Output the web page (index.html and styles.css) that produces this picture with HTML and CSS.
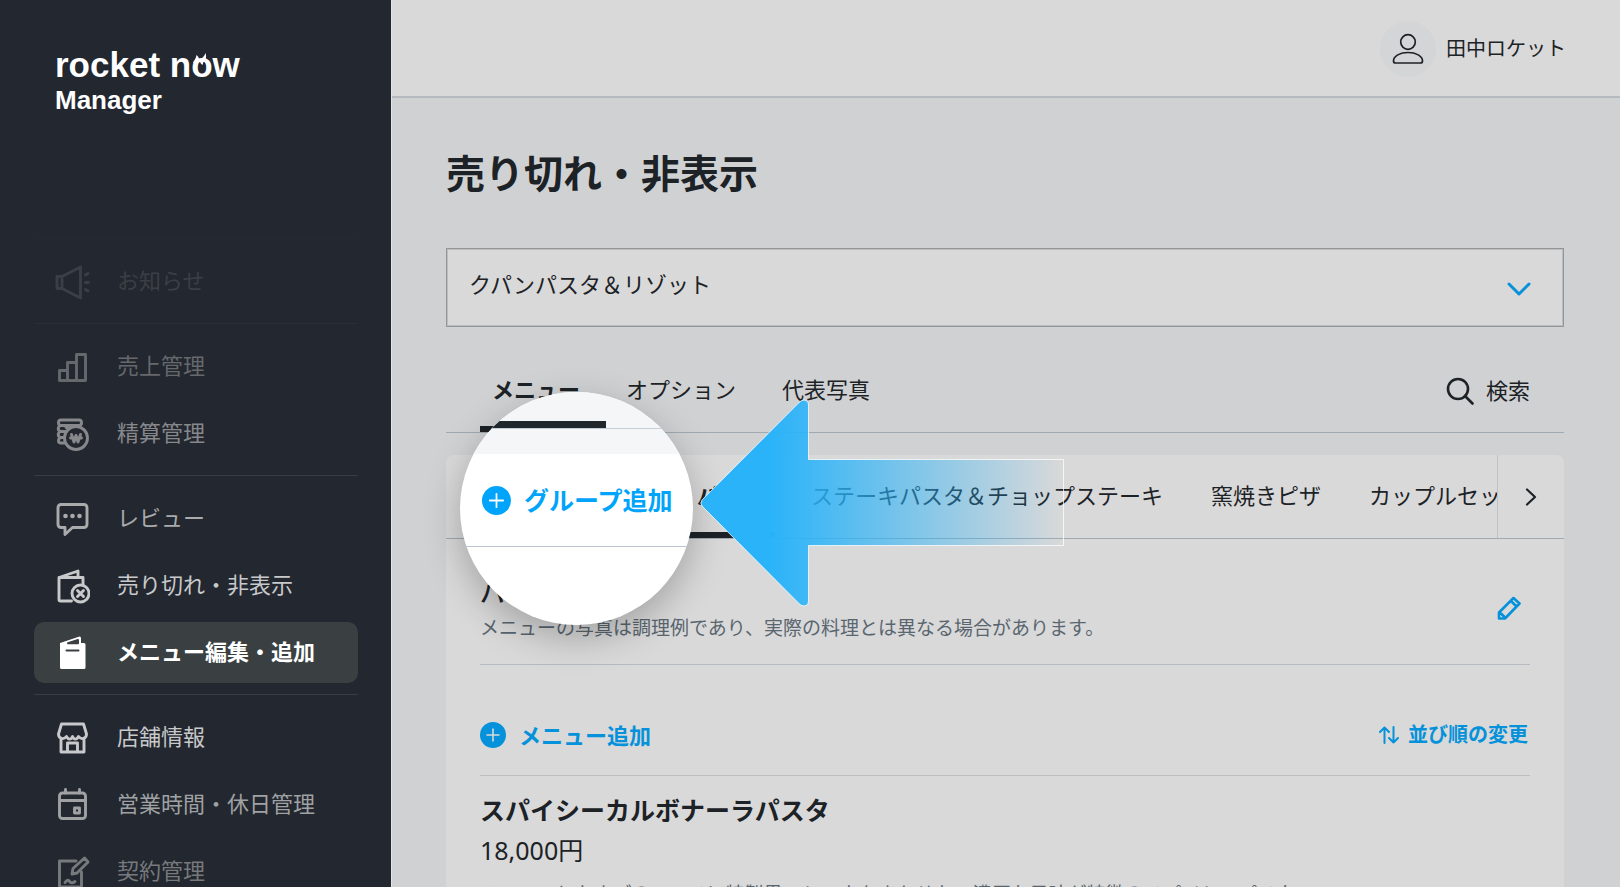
FILE: index.html
```html
<!DOCTYPE html>
<html lang="ja">
<head>
<meta charset="utf-8">
<meta name="viewport" content="width=device-width, initial-scale=1">
<title>rocket now Manager</title>
<link rel="stylesheet" href="styles.css">
</head>
<body>
<div class="app">
  <aside class="sidebar">
    <div class="brand">
      <div class="brand-name">rocket now
        <svg class="brand-flame" viewBox="0 0 24 26" aria-hidden="true">
          <path d="M3 11C4 8 6 7 6.500 3 8 4 9 6 9 7.500 12 6.500 14.500 4.500 15.500 1 16.500 4 16 6 15.500 7.500 18 8 19.500 9.500 20 11L16 11.500C15 10 14 10 13.500 9.800L12.500 13C11 12 10.500 11 10 10 8 10 7 11 6.500 12Z"/>
        </svg>
      </div>
      <div class="brand-role">Manager</div>
    </div>
    <nav class="side-nav" aria-label="メインメニュー">
      <div class="side-group">
        <a class="side-item tone-1" href="#">
          <svg class="side-icon" viewBox="0 0 36 36"><path d="M3 12.500h5v12H3zM8 12.500 26.500 3v31L8 24.500zM31.500 11l2.500-1.500M31.500 18.500h3M31.500 25.500l2.500 1.500"/></svg>
          <span>お知らせ</span>
        </a>
      </div>
      <div class="side-group">
        <a class="side-item tone-2" href="#">
          <svg class="side-icon" viewBox="0 0 36 36"><path d="M5.500 21.500h8v10h-8zM13.500 13.500h9v18h-9zM22.500 5.500h9v26h-9z"/></svg>
          <span>売上管理</span>
        </a>
        <a class="side-item tone-3" href="#">
          <svg class="side-icon" viewBox="0 0 36 36"><rect x="4.500" y="4" width="23" height="5.500" rx="2.500"/><path d="M6.500 9.500C3.500 11 3.500 14.500 6.500 15.500h5M6.500 15.500C3.500 17 3.500 20.500 6.500 21.500h4M6.500 21.500C3.500 23.500 4 27 7 27h4M12 11.500h5"/><circle cx="22" cy="22" r="11.500"/><path d="m17.500 18.500 2.500 7.500 2-6.500 2 6.500 2.500-7.500M16.500 22h11"/></svg>
          <span>精算管理</span>
        </a>
      </div>
      <div class="side-group">
        <a class="side-item tone-4" href="#">
          <svg class="side-icon" viewBox="0 0 36 36"><path d="M7 3.500h23a3 3 0 0 1 3 3v17a3 3 0 0 1-3 3H18.500L11 33.500v-7H7a3 3 0 0 1-3-3v-17a3 3 0 0 1 3-3Z"/><g class="solid"><circle cx="11.500" cy="15" r="2.300"/><circle cx="18.500" cy="15" r="2.300"/><circle cx="25.500" cy="15" r="2.300"/></g></svg>
          <span>レビュー</span>
        </a>
        <a class="side-item tone-5" href="#">
          <svg class="side-icon" viewBox="0 0 36 36"><path d="M17.500 33h-11a1.500 1.500 0 0 1-1.500-1.500V9.500h24V16M5 9.500 24 3v6.500M10 9.500h14"/><circle cx="26.500" cy="25.500" r="8.500"/><path d="m23.500 22.500 6 6m0-6-6 6"/></svg>
          <span>売り切れ・非表示</span>
        </a>
        <a class="side-item side-item-active" href="#" aria-current="page">
          <svg class="side-icon" viewBox="0 0 36 36"><path class="solid" d="M6 8 25.500 1.500Q27 1.500 27 3v5h3a1.500 1.500 0 0 1 1.500 1.500v23a1.500 1.500 0 0 1-1.500 1.500H7.500A1.500 1.500 0 0 1 6 32.500Z"/><path class="cutout" d="M14 8.300 24 5v3.300ZM12.500 15.500h12"/></svg>
          <span>メニュー編集・追加</span>
        </a>
      </div>
      <div class="side-group">
        <a class="side-item tone-6" href="#">
          <svg class="side-icon" viewBox="0 0 36 36"><path d="M7.500 4h22l3 10c0 5-5.500 6-8 2.500-2 3.500-4.500 3.500-6 0-1.500 3.500-4 3.500-6 0-2.500 3.500-8 2.500-8-2.500ZM7 18.500V32h23V18.500M13.500 32v-9h10v9"/></svg>
          <span>店舗情報</span>
        </a>
        <a class="side-item tone-7" href="#">
          <svg class="side-icon" viewBox="0 0 36 36"><rect x="5.500" y="6" width="26" height="25.500" rx="3"/><path d="M5.500 13.500h26M11.500 2.500V6M25.500 2.500V6M20.500 21h5v5h-5z"/></svg>
          <span>営業時間・休日管理</span>
        </a>
        <a class="side-item tone-8" href="#">
          <svg class="side-icon" viewBox="0 0 36 36"><path d="M22 7H5.500v26h22V18M11 28.500c3-4 4-1.500 5-.5s3 1 5-.5M18 20l1-5.500L30.500 4l3.500 4-11 11Z"/></svg>
          <span>契約管理</span>
        </a>
      </div>
    </nav>
  </aside>

  <div class="workspace">
    <header class="topbar">
      <button class="account" type="button">
        <span class="avatar"><svg viewBox="0 0 32 32" aria-hidden="true"><circle cx="16" cy="9" r="7.300"/><path d="M3.500 30h25a2 2 0 0 0 2-2C30.500 23 24 19.500 16 19.500S1.500 23 1.500 28a2 2 0 0 0 2 2Z"/></svg></span>
        <span>田中ロケット</span>
      </button>
    </header>

    <main class="content">
      <h1 class="page-title">売り切れ・非表示</h1>
      <div class="store-picker">
        <select class="store-select" aria-label="店舗">
          <option>クパンパスタ＆リゾット</option>
        </select>
        <svg class="store-chevron" viewBox="0 0 24 14" aria-hidden="true"><path d="m2 2 10 10L22 2"/></svg>
      </div>

      <div class="tabs">
        <button class="tab tab-active" type="button">メニュー</button>
        <button class="tab" type="button">オプション</button>
        <button class="tab" type="button">代表写真</button>
        <button class="search" type="button">
          <svg viewBox="0 0 28 28" aria-hidden="true"><circle cx="12" cy="12" r="10"/><path d="m19 19 7.500 7.500"/></svg>
          <span>検索</span>
        </button>
      </div>

      <section class="card">
        <div class="groups">
          <div class="group-list">
            <button class="tab tab-active" type="button">パスタ</button>
            <button class="tab" type="button">ステーキパスタ＆チョップステーキ</button>
            <button class="tab" type="button">窯焼きピザ</button>
            <button class="tab" type="button">カップルセット</button>
          </div>
          <button class="group-next" type="button" aria-label="次へ"><svg viewBox="0 0 12 18" aria-hidden="true"><path d="m2 1.500 8 7.500-8 7.500"/></svg></button>
        </div>

        <div class="card-body">
          <div class="group-head">
            <div class="group-text">
              <h2 class="group-title">パスタ</h2>
              <p class="note">メニューの写真は調理例であり、実際の料理とは異なる場合があります。</p>
            </div>
            <button class="edit" type="button" aria-label="編集"><svg viewBox="0 0 24 24" aria-hidden="true"><path d="M2 22.500v-6L16.500 2 22.500 7.500 8 22.500ZM14 5l5.500 5.500M3 16.500l5.500 5.500"/></svg></button>
          </div>
          <div class="menu-actions">
            <button class="add" type="button">
              <svg viewBox="0 0 26 26" aria-hidden="true"><circle cx="13" cy="13" r="13"/><path d="M13 7v12M7 13h12"/></svg>
              <span>メニュー追加</span>
            </button>
            <button class="sort" type="button">
              <svg viewBox="0 0 20 18" aria-hidden="true"><path d="M5.500 17V1.500M1 6l4.500-4.500L10 6M14.500 1v15.500M10 12l4.500 4.500L19 12"/></svg>
              <span>並び順の変更</span>
            </button>
          </div>
          <article class="menu-item">
            <h3 class="item-title">スパイシーカルボナーラパスタ</h3>
            <p class="price">18,000円</p>
            <p class="note">ベーコンとたまごのソースに特製黒コショウをきかせた、濃厚な風味が特徴のスパイシーパスタ</p>
          </article>
        </div>
      </section>
    </main>

    <div class="lens">
      <div class="lens-tabs"><div class="lens-bar"></div></div>
      <div class="lens-row">
        <button class="add add-large" type="button">
          <svg viewBox="0 0 26 26" aria-hidden="true"><circle cx="13" cy="13" r="13"/><path d="M13 7v12M7 13h12"/></svg>
          <span>グループ追加</span>
        </button>
      </div>
    </div>

    <svg class="pointer" viewBox="0 0 366 210" aria-hidden="true">
      <defs>
        <linearGradient id="pointer-fill" gradientUnits="userSpaceOnUse" x1="68" y1="0" x2="364" y2="0">
          <stop offset="0" stop-color="#2ab3f9"/>
          <stop offset=".14" stop-color="#2ab3f9" stop-opacity=".87"/>
          <stop offset="1" stop-color="#2ab3f9" stop-opacity="0"/>
        </linearGradient>
      </defs>
      <path fill="url(#pointer-fill)" stroke="#fff" stroke-opacity=".75" d="M2 102Q-.5 105 2 108L98.500 205Q101 208 104 208 108.500 207.500 108.500 203V147.500H363.500V61.500H108.500V7Q108.500 2.500 104 2 101 2 98.500 5Z"/>
    </svg>
  </div>
</div>
</body>
</html>
```

FILE: styles.css
```css
* { box-sizing: border-box; }

body {
  margin: 0;
  font-family: "Noto Sans", "Noto Sans CJK JP", sans-serif;
  font-size: 22px;
  line-height: 30px;
  color: #1c2226;
  background: #d0d1d3;
}

h1, h2, h3, p { margin: 0; }

button {
  margin: 0;
  padding: 0;
  border: 0;
  background: none;
  font: inherit;
  color: inherit;
  white-space: nowrap;
}

svg {
  display: block;
  flex: none;
  fill: none;
  stroke: currentColor;
  stroke-linecap: round;
  stroke-linejoin: round;
}

.app {
  display: flex;
  height: 100vh;
  overflow: hidden;
}

/* Sidebar */
.sidebar {
  flex: none;
  width: 392px;
  padding: 46px 33px 0 34px;
  border-right: 1px solid #e4e5e7;
  background: #23272f;
  color: #fff;
}

.brand {
  height: 192px;
  padding-left: 21px;
  font-family: "Liberation Sans", Arial, sans-serif;
  font-weight: 700;
}

.brand-name {
  position: relative;
  width: max-content;
  font-size: 35px;
  line-height: 38px;
}

.brand-flame {
  position: absolute;
  right: 26px;
  bottom: 6px;
  width: 24px;
  height: 26px;
  fill: #fff;
  stroke: none;
}

.brand-role {
  font-size: 26px;
  line-height: 32px;
}

.side-group {
  display: flex;
  flex-direction: column;
  gap: 6px;
  padding: 12px 0 11px;
  border-top: 1px solid #383d44;
}

.side-group:nth-child(1) { border-color: #252a31; }
.side-group:nth-child(2) { border-color: #2a2e35; }

.side-item {
  display: flex;
  align-items: center;
  gap: 27px;
  height: 61px;
  padding: 0 20px;
  border-radius: 10px;
  color: #fff;
  text-decoration: none;
  white-space: nowrap;
}

.side-item span { padding-bottom: 3px; }

.side-item-active {
  background: #3a3f42;
  font-weight: 700;
}

.side-icon {
  width: 36px;
  height: 36px;
  stroke-width: 2.9;
}

.side-icon .solid { fill: currentColor; stroke: none; }
.side-icon .cutout { fill: #3a3f42; stroke: #3a3f42; stroke-width: 2; }

.tone-1 { color: #3b3f45; }
.tone-2 { color: #65686c; }
.tone-3 { color: #86888b; }
.tone-4 { color: #a9aaac; }
.tone-5 { color: #c8c9ca; }
.tone-6 { color: #c8c9ca; }
.tone-7 { color: #9fa1a3; }
.tone-8 { color: #777a7d; }

/* Workspace */
.workspace {
  position: relative;
  flex: 1;
  min-width: 0;
}

.topbar {
  display: flex;
  justify-content: flex-end;
  align-items: center;
  height: 98px;
  padding: 2px 54px 0;
  border-bottom: 2px solid #b5b9c0;
  background: #d9d9d9;
}

.account {
  display: flex;
  align-items: center;
  gap: 10px;
  font-size: 20px;
}

.avatar {
  display: grid;
  place-items: center;
  width: 56px;
  height: 56px;
  border-radius: 50%;
  background: #d4d5d7;
}

.avatar svg {
  width: 32px;
  height: 32px;
  stroke-width: 1.7;
}

.content { padding: 47px 56px 0 54px; }

.page-title {
  margin-bottom: 47px;
  font-size: 39px;
  line-height: 56px;
}

.store-picker { position: relative; }

.store-select {
  display: block;
  width: 100%;
  height: 79px;
  padding: 0 22px 8px;
  border: 1px solid #949596;
  border-radius: 0;
  box-shadow: inset 0 0 0 1px #bcbdbe;
  background: #d9d9d9;
  appearance: none;
  font: inherit;
  color: inherit;
}

.store-chevron {
  position: absolute;
  top: 34px;
  right: 33px;
  width: 24px;
  height: 14px;
  color: #0890d8;
  stroke-width: 3;
  pointer-events: none;
}

.tabs {
  display: flex;
  gap: 22px;
  margin: 29px 0 22px;
  padding: 0 34px;
  border-bottom: 1px solid #9fabb2;
}

.tab {
  padding: 18px 12px 22px;
  border-bottom: 6px solid transparent;
}

.tab-active {
  border-color: #1c2226;
  font-weight: 700;
}

.search {
  display: flex;
  align-items: center;
  gap: 12px;
  margin-left: auto;
  padding-bottom: 6px;
}

.search span { padding-bottom: 3px; }

.search svg {
  width: 28px;
  height: 28px;
  stroke-width: 2.6;
}

.card {
  border-radius: 8px 8px 0 0;
  background: #d9d9d9;
}

.groups {
  display: flex;
  border-bottom: 1px solid #9faab2;
}

.group-list {
  display: flex;
  flex: 1;
  gap: 24px;
  min-width: 0;
  padding: 7px 0 0 239px;
  overflow: hidden;
}

.group-next {
  display: grid;
  place-items: center;
  width: 67px;
  border-left: 1px solid #bec1c4;
}

.group-next svg {
  width: 12px;
  height: 18px;
  stroke-width: 2.2;
}

.card-body { padding: 0 34px; }

.group-head {
  display: flex;
  justify-content: space-between;
  align-items: center;
  padding: 35px 0 22px;
  border-bottom: 1px solid #b6bac1;
}

.group-title,
.item-title {
  font-size: 25px;
  line-height: 36px;
}

.group-title { font-weight: 500; }

.note {
  margin-top: 4px;
  font-size: 19px;
  line-height: 28px;
  color: #596670;
  white-space: nowrap;
}

.edit { padding-right: 9px; }

.edit svg {
  width: 24px;
  height: 24px;
  color: #0592da;
  stroke-width: 2.6;
}

.menu-actions {
  display: flex;
  justify-content: space-between;
  padding: 54px 0 24px;
  border-bottom: 1px solid #bdbebf;
}

.add,
.sort {
  display: flex;
  align-items: center;
  height: 32px;
  gap: 13px;
  color: #0592da;
  font-weight: 700;
}

.add svg {
  width: 26px;
  height: 26px;
  stroke: #d9d9d9;
  stroke-width: 1.6;
}

.add circle {
  fill: #0592da;
  stroke: none;
}

.sort {
  gap: 9px;
  padding-right: 2px;
  font-size: 20px;
}

.sort svg {
  width: 20px;
  height: 18px;
  stroke-width: 2;
}

.menu-item { padding-top: 16px; }

.price {
  margin-top: 4px;
  font-size: 25px;
  line-height: 36px;
}

.menu-item .note { margin-top: 12px; }

/* Spotlight lens and pointer arrow laid over the page */
.lens {
  position: absolute;
  top: 392px;
  left: 68px;
  width: 233px;
  height: 233px;
  overflow: hidden;
  border-radius: 50%;
  background: #fff;
  box-shadow: 0 12px 36px rgba(0, 0, 0, .25);
}

.lens-tabs {
  height: 62px;
  padding-top: 29px;
  background: #f5f6f8;
}

.lens-bar {
  height: 8px;
  border-bottom: 1px solid #c3ced8;
  background: linear-gradient(#20282e, #20282e) 0 0 / 146px 7px no-repeat;
}

.lens-row {
  padding: 30px 22px;
  border-bottom: 1px solid #b9c4d0;
}

.add-large {
  color: #00a4fa;
  font-size: 25px;
}

.add-large svg {
  width: 29px;
  height: 29px;
  stroke: #fff;
}

.add-large circle { fill: #00a4fa; }

.pointer {
  position: absolute;
  top: 398px;
  left: 308px;
  width: 366px;
  height: 210px;
  pointer-events: none;
}
```
